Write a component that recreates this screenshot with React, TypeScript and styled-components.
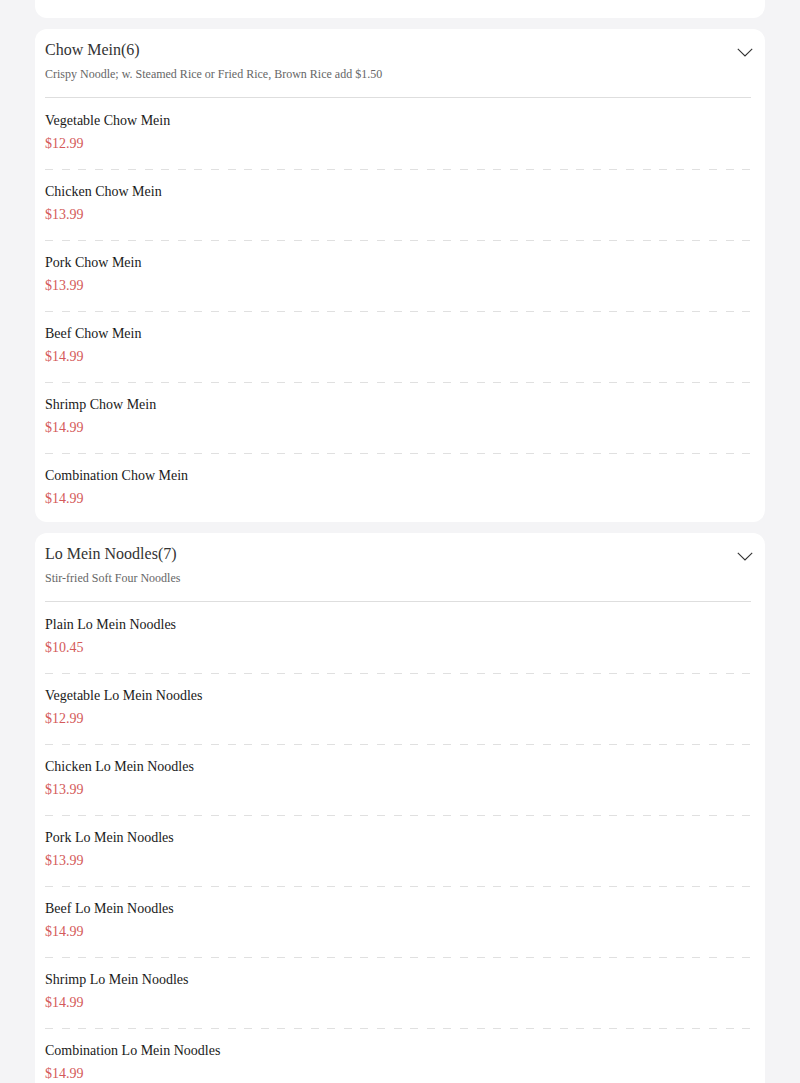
import React from "react";
import styled, { createGlobalStyle } from "styled-components";

const Global = createGlobalStyle`
  html, body { margin: 0; padding: 0; background: #f4f4f6; }
  body { font-family: "Liberation Serif", "Times New Roman", serif; }
`;

const Page = styled.div`
  display: flex;
  flex-direction: column;
  gap: 11px;
  padding: 0 35px;
`;

const Card = styled.section`
  background: #fff;
  border-radius: 12px;
  overflow: hidden;
`;

const StubCard = styled(Card)`
  height: 18px;
  border-radius: 0 0 12px 12px;
  padding: 0 10px;
`;

const StubPrice = styled.div`
  font-size: 14px;
  line-height: 20px;
  margin-top: -15px;
  color: #e6e6e6;
`;

const Header = styled.header`
  padding: 11px 12px 0 10px;
`;

const TitleRow = styled.div`
  display: flex;
  align-items: center;
  justify-content: space-between;
`;

const Title = styled.h2`
  margin: 0;
  font-size: 16px;
  font-weight: normal;
  line-height: 20px;
  color: #333;
`;

const Chevron = styled.svg`
  width: 16px;
  height: 9px;
  margin-top: 5px;
`;

const Subtitle = styled.p`
  margin: 6px 0 0;
  font-size: 12px;
  line-height: 16px;
  color: #666;
`;

const Divider = styled.div`
  height: 1px;
  background: #dedede;
  margin: 15px 2px 0 0;
`;

const List = styled.ul`
  list-style: none;
  margin: 0;
  padding: 0 10px;
`;

const Item = styled.li`
  padding: 12px 0 15px;
  background-image: repeating-linear-gradient(
    to right,
    #e0e0e0 0 8px,
    transparent 8px 16.6px
  );
  background-origin: border-box;
  background-size: 100% 1px;
  background-repeat: no-repeat;
  background-position: left bottom;
  border-bottom: 1px solid transparent;
  &:first-child {
    padding-top: 13px;
  }
  &:last-child {
    background-image: none;
    border-bottom: none;
    padding-bottom: 13px;
  }
`;

const Name = styled.div`
  font-size: 14px;
  line-height: 20px;
  color: #1a1a1a;
`;

const Price = styled.div`
  margin-top: 3px;
  font-size: 14px;
  line-height: 20px;
  color: #d45a5a;
`;

type Dish = { name: string; price: string };
type Section = { title: string; count: number; desc: string; items: Dish[] };

const sections: Section[] = [
  {
    title: "Chow Mein",
    count: 6,
    desc: "Crispy Noodle; w. Steamed Rice or Fried Rice, Brown Rice add $1.50",
    items: [
      { name: "Vegetable Chow Mein", price: "$12.99" },
      { name: "Chicken Chow Mein", price: "$13.99" },
      { name: "Pork Chow Mein", price: "$13.99" },
      { name: "Beef Chow Mein", price: "$14.99" },
      { name: "Shrimp Chow Mein", price: "$14.99" },
      { name: "Combination Chow Mein", price: "$14.99" },
    ],
  },
  {
    title: "Lo Mein Noodles",
    count: 7,
    desc: "Stir-fried Soft Four Noodles",
    items: [
      { name: "Plain Lo Mein Noodles", price: "$10.45" },
      { name: "Vegetable Lo Mein Noodles", price: "$12.99" },
      { name: "Chicken Lo Mein Noodles", price: "$13.99" },
      { name: "Pork Lo Mein Noodles", price: "$13.99" },
      { name: "Beef Lo Mein Noodles", price: "$14.99" },
      { name: "Shrimp Lo Mein Noodles", price: "$14.99" },
      { name: "Combination Lo Mein Noodles", price: "$14.99" },
    ],
  },
];

export default function App() {
  return (
    <>
      <Global />
      <Page>
        <StubCard>
          <StubPrice>$14.99</StubPrice>
        </StubCard>
        {sections.map((s) => (
          <Card key={s.title}>
            <Header>
              <TitleRow>
                <Title>
                  {s.title}({s.count})
                </Title>
                <Chevron viewBox="0 0 16 9" fill="none">
                  <path d="M0.8 0.8 L8 8 L15.2 0.8" stroke="#333" strokeWidth="1.1" />
                </Chevron>
              </TitleRow>
              <Subtitle>{s.desc}</Subtitle>
              <Divider />
            </Header>
            <List>
              {s.items.map((it) => (
                <Item key={it.name}>
                  <Name>{it.name}</Name>
                  <Price>{it.price}</Price>
                </Item>
              ))}
            </List>
          </Card>
        ))}
      </Page>
    </>
  );
}
